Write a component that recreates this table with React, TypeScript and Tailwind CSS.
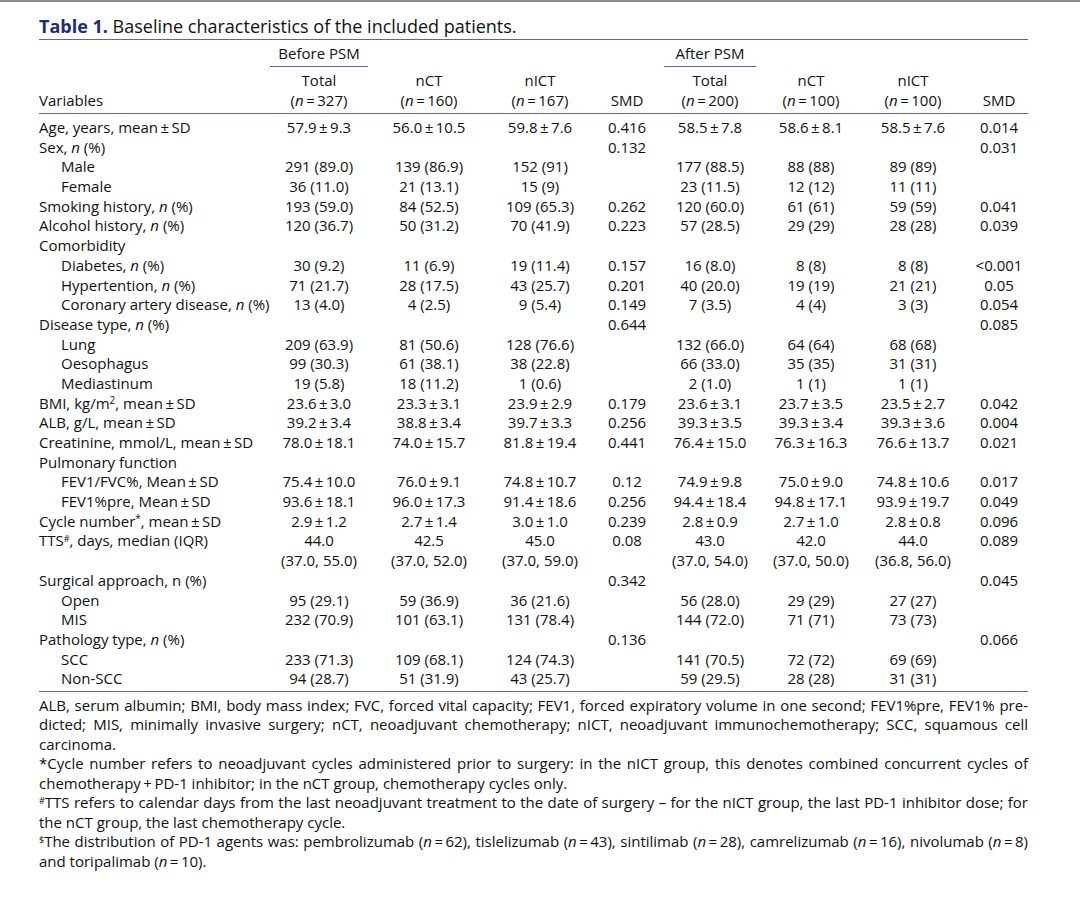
import React from "react";

const cols = "grid grid-cols-[228px_104px_116px_106px_68px_98px_104px_100px_65px]";
const pm = (s: string) => s.replace(/±/g, "\u2009±\u2009");
const N = () => <i>n</i>;

type Row = { label?: React.ReactNode; sub?: boolean; v?: string[] };

const rows: Row[] = [
  { label: <>Age, years, mean{"\u2009±\u2009"}SD</>, v: ["57.9±9.3", "56.0±10.5", "59.8±7.6", "0.416", "58.5±7.8", "58.6±8.1", "58.5±7.6", "0.014"] },
  { label: <>Sex, <N /> (%)</>, v: ["", "", "", "0.132", "", "", "", "0.031"] },
  { label: "Male", sub: true, v: ["291 (89.0)", "139 (86.9)", "152 (91)", "", "177 (88.5)", "88 (88)", "89 (89)", ""] },
  { label: "Female", sub: true, v: ["36 (11.0)", "21 (13.1)", "15 (9)", "", "23 (11.5)", "12 (12)", "11 (11)", ""] },
  { label: <>Smoking history, <N /> (%)</>, v: ["193 (59.0)", "84 (52.5)", "109 (65.3)", "0.262", "120 (60.0)", "61 (61)", "59 (59)", "0.041"] },
  { label: <>Alcohol history, <N /> (%)</>, v: ["120 (36.7)", "50 (31.2)", "70 (41.9)", "0.223", "57 (28.5)", "29 (29)", "28 (28)", "0.039"] },
  { label: "Comorbidity" },
  { label: <>Diabetes, <N /> (%)</>, sub: true, v: ["30 (9.2)", "11 (6.9)", "19 (11.4)", "0.157", "16 (8.0)", "8 (8)", "8 (8)", "<0.001"] },
  { label: <>Hypertention, <N /> (%)</>, sub: true, v: ["71 (21.7)", "28 (17.5)", "43 (25.7)", "0.201", "40 (20.0)", "19 (19)", "21 (21)", "0.05"] },
  { label: <>Coronary artery disease, <N /> (%)</>, sub: true, v: ["13 (4.0)", "4 (2.5)", "9 (5.4)", "0.149", "7 (3.5)", "4 (4)", "3 (3)", "0.054"] },
  { label: <>Disease type, <N /> (%)</>, v: ["", "", "", "0.644", "", "", "", "0.085"] },
  { label: "Lung", sub: true, v: ["209 (63.9)", "81 (50.6)", "128 (76.6)", "", "132 (66.0)", "64 (64)", "68 (68)", ""] },
  { label: "Oesophagus", sub: true, v: ["99 (30.3)", "61 (38.1)", "38 (22.8)", "", "66 (33.0)", "35 (35)", "31 (31)", ""] },
  { label: "Mediastinum", sub: true, v: ["19 (5.8)", "18 (11.2)", "1 (0.6)", "", "2 (1.0)", "1 (1)", "1 (1)", ""] },
  { label: <>BMI, kg/m<sup className="text-[10px]">2</sup>, mean{"\u2009±\u2009"}SD</>, v: ["23.6±3.0", "23.3±3.1", "23.9±2.9", "0.179", "23.6±3.1", "23.7±3.5", "23.5±2.7", "0.042"] },
  { label: <>ALB, g/L, mean{"\u2009±\u2009"}SD</>, v: ["39.2±3.4", "38.8±3.4", "39.7±3.3", "0.256", "39.3±3.5", "39.3±3.4", "39.3±3.6", "0.004"] },
  { label: <>Creatinine, mmol/L, mean{"\u2009±\u2009"}SD</>, v: ["78.0±18.1", "74.0±15.7", "81.8±19.4", "0.441", "76.4±15.0", "76.3±16.3", "76.6±13.7", "0.021"] },
  { label: "Pulmonary function" },
  { label: <>FEV1/FVC%, Mean{"\u2009±\u2009"}SD</>, sub: true, v: ["75.4±10.0", "76.0±9.1", "74.8±10.7", "0.12", "74.9±9.8", "75.0±9.0", "74.8±10.6", "0.017"] },
  { label: <>FEV1%pre, Mean{"\u2009±\u2009"}SD</>, sub: true, v: ["93.6±18.1", "96.0±17.3", "91.4±18.6", "0.256", "94.4±18.4", "94.8±17.1", "93.9±19.7", "0.049"] },
  { label: <>Cycle number<sup className="text-[10px]">*</sup>, mean{"\u2009±\u2009"}SD</>, v: ["2.9±1.2", "2.7±1.4", "3.0±1.0", "0.239", "2.8±0.9", "2.7±1.0", "2.8±0.8", "0.096"] },
  { label: <>TTS<sup className="text-[9px]">#</sup>, days, median (IQR)</>, v: ["44.0", "42.5", "45.0", "0.08", "43.0", "42.0", "44.0", "0.089"] },
  { label: "", v: ["(37.0, 55.0)", "(37.0, 52.0)", "(37.0, 59.0)", "", "(37.0, 54.0)", "(37.0, 50.0)", "(36.8, 56.0)", ""] },
  { label: "Surgical approach, n (%)", v: ["", "", "", "0.342", "", "", "", "0.045"] },
  { label: "Open", sub: true, v: ["95 (29.1)", "59 (36.9)", "36 (21.6)", "", "56 (28.0)", "29 (29)", "27 (27)", ""] },
  { label: "MIS", sub: true, v: ["232 (70.9)", "101 (63.1)", "131 (78.4)", "", "144 (72.0)", "71 (71)", "73 (73)", ""] },
  { label: <>Pathology type, <N /> (%)</>, v: ["", "", "", "0.136", "", "", "", "0.066"] },
  { label: "SCC", sub: true, v: ["233 (71.3)", "109 (68.1)", "124 (74.3)", "", "141 (70.5)", "72 (72)", "69 (69)", ""] },
  { label: "Non-SCC", sub: true, v: ["94 (28.7)", "51 (31.9)", "43 (25.7)", "", "59 (29.5)", "28 (28)", "31 (31)", ""] },
];

const Ng = ({ n }: { n: number }) => (
  <>
    (<i>n</i>
    {"\u2009=\u2009"}
    {n})
  </>
);

const Rule = () => <div className="h-px bg-[#5f63ab]" />;

// justified footnote line (not the last of its paragraph)
const J = ({ children }: { children: React.ReactNode }) => (
  <div className="text-justify [text-align-last:justify] whitespace-nowrap">{children}</div>
);

export default function App() {
  return (
    <div className="min-h-[922px] bg-white text-[#111] font-['Open_Sans',sans-serif] text-[15px]">
      <div className="h-[2px] bg-[#8c8c8c]" />
      <div className="ml-[39px] w-[989px]">
        <div className="pt-[12px] leading-[25px] text-[18px]">
          <span className="font-bold text-[#1f2a7c]">Table 1.</span> Baseline characteristics of the included patients.
        </div>
        <Rule />

        {/* header */}
        <div className={`${cols} text-center leading-[20px]`}>
          <div />
          <div className="mx-[3px] pt-[3px] pb-[3px] border-b border-[#5f63ab]">Before PSM</div>
          <div />
          <div />
          <div />
          <div className="mx-[3px] pt-[3px] pb-[3px] border-b border-[#5f63ab]">After PSM</div>
          <div />
          <div />
          <div />

          <div className="mt-[3px]" />
          <div className="mt-[3px]">Total</div>
          <div className="mt-[3px]">nCT</div>
          <div className="mt-[3px]">nICT</div>
          <div className="mt-[3px]" />
          <div className="mt-[3px]">Total</div>
          <div className="mt-[3px]">nCT</div>
          <div className="mt-[3px]">nICT</div>
          <div className="mt-[3px]" />

          <div className="text-left pb-[3px]">Variables</div>
          <div><Ng n={327} /></div>
          <div><Ng n={160} /></div>
          <div><Ng n={167} /></div>
          <div>SMD</div>
          <div><Ng n={200} /></div>
          <div><Ng n={100} /></div>
          <div><Ng n={100} /></div>
          <div className="pl-[7px]">SMD</div>
        </div>
        <Rule />

        {/* body */}
        <div className="pt-[4px] pb-[2px]">
          {rows.map((r, i) => (
            <div key={i} className={`${cols} h-[19.7px] leading-[19.7px] whitespace-nowrap`}>
              <div className={r.sub ? "pl-[22px]" : ""}>{r.label}</div>
              {(r.v ?? ["", "", "", "", "", "", "", ""]).map((c, j) => (
                <div key={j} className={`text-center ${j === 7 ? "pl-[7px]" : ""}`}>
                  {pm(c)}
                </div>
              ))}
            </div>
          ))}
        </div>
        <Rule />

        {/* footnotes */}
        <div className="pt-[4px] leading-[19.5px]">
          <J>ALB, serum albumin; BMI, body mass index; FVC, forced vital capacity; FEV1, forced expiratory volume in one second; FEV1%pre, FEV1% pre-</J>
          <J>dicted; MIS, minimally invasive surgery; nCT, neoadjuvant chemotherapy; nICT, neoadjuvant immunochemotherapy; SCC, squamous cell</J>
          <div>carcinoma.</div>
          <J>*Cycle number refers to neoadjuvant cycles administered prior to surgery: in the nICT group, this denotes combined concurrent cycles of</J>
          <div>chemotherapy{"\u2009+\u2009"}PD-1 inhibitor; in the nCT group, chemotherapy cycles only.</div>
          <J>
            <sup className="text-[9px]">#</sup>TTS refers to calendar days from the last neoadjuvant treatment to the date of surgery – for the nICT group, the last PD-1 inhibitor dose; for
          </J>
          <div>the nCT group, the last chemotherapy cycle.</div>
          <J>
            <sup className="text-[9px]">$</sup>The distribution of PD-1 agents was: pembrolizumab (<i>n</i>{"\u2009=\u2009"}62), tislelizumab (<i>n</i>{"\u2009=\u2009"}43), sintilimab (<i>n</i>{"\u2009=\u2009"}28), camrelizumab (<i>n</i>{"\u2009=\u2009"}16), nivolumab (<i>n</i>{"\u2009=\u2009"}8)
          </J>
          <div>
            and toripalimab (<i>n</i>{"\u2009=\u2009"}10).
          </div>
        </div>
      </div>
    </div>
  );
}
